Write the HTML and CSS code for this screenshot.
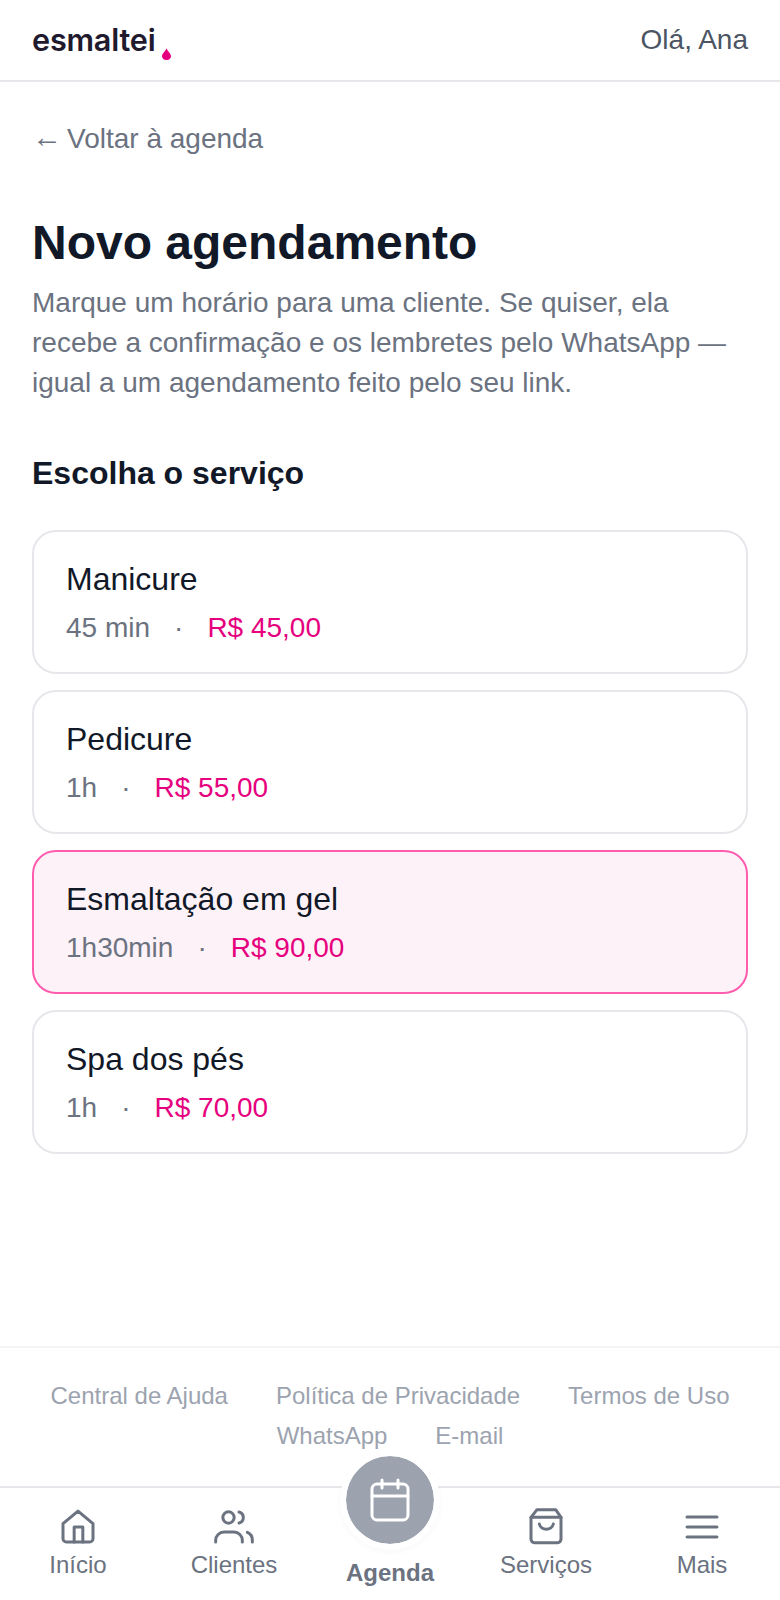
FILE: index.html
```html
<!DOCTYPE html>
<html lang="pt-BR">
<head>
    <meta charset="UTF-8">
    <meta name="viewport" content="width=device-width, initial-scale=1.0">
    <title>Novo agendamento | esmaltei</title>
    <link rel="stylesheet" href="styles.css">
</head>
<body>
<div class="page">

    <header class="topbar">
        <div class="logo">
            <span class="logo-text">esmaltei</span>
            <svg class="logo-drop" viewBox="0 0 10 13"><path d="M5 0C6 3 10 6 10 9a5 4.2 0 0 1-10 0C0 6 4 3 5 0z"/></svg>
        </div>
        <span class="greeting">Olá, Ana</span>
    </header>

    <main class="content">
        <a class="back-link"><span class="arrow">←</span>Voltar à agenda</a>
        <h1>Novo agendamento</h1>
        <p class="intro">Marque um horário para uma cliente. Se quiser, ela recebe a confirmação e os lembretes pelo WhatsApp — igual a um agendamento feito pelo seu link.</p>
        <h2>Escolha o serviço</h2>

        <div class="service-list">
            <div class="service">
                <div class="service-name">Manicure</div>
                <div class="service-meta"><span>45 min</span><span class="dot">·</span><span class="price">R$ 45,00</span></div>
            </div>
            <div class="service">
                <div class="service-name">Pedicure</div>
                <div class="service-meta"><span>1h</span><span class="dot">·</span><span class="price">R$ 55,00</span></div>
            </div>
            <div class="service selected">
                <div class="service-name">Esmaltação em gel</div>
                <div class="service-meta"><span>1h30min</span><span class="dot">·</span><span class="price">R$ 90,00</span></div>
            </div>
            <div class="service">
                <div class="service-name">Spa dos pés</div>
                <div class="service-meta"><span>1h</span><span class="dot">·</span><span class="price">R$ 70,00</span></div>
            </div>
        </div>
    </main>

    <footer class="site-footer">
        <a>Central de Ajuda</a>
        <a>Política de Privacidade</a>
        <a>Termos de Uso</a>
        <a>WhatsApp</a>
        <a>E-mail</a>
    </footer>

    <nav class="bottom-nav">
        <a class="nav-item">
            <svg class="nav-icon" viewBox="0 0 24 24"><path d="M9.7 21v-9h5.2v9"/><path d="M12 2.5 21 10V19a2 2 0 0 1-2 2H5a2 2 0 0 1-2-2V10z"/></svg>
            Início
        </a>
        <a class="nav-item">
            <svg class="nav-icon" viewBox="0 0 24 24"><path d="M1 21v-1a5 5 0 0 1 5-5h6a5 5 0 0 1 5 5v1"/><circle cx="8.7" cy="6.3" r="3.4"/><path d="M23 21v-1.2a5 5 0 0 0-3-4.6"/><path d="M15 3a3.4 3.4 0 0 1 0 6.6"/></svg>
            Clientes
        </a>
        <a class="nav-item nav-center">
            <span class="nav-fab">
                <svg class="fab-icon" viewBox="0 0 24 24"><path d="M8 2v4"/><path d="M16 2v4"/><rect x="3" y="4" width="18" height="18" rx="2.5"/><path d="M3 10h18"/></svg>
            </span>
            Agenda
        </a>
        <a class="nav-item">
            <svg class="nav-icon" viewBox="0 0 24 24"><path d="M6.6 1.6h11.2L21 6.2V19.4a2 2 0 0 1-2 2H5a2 2 0 0 1-2-2V6.2z"/><path d="M3 6.2h18"/><path d="M16.4 10.2a4.3 4 0 0 1-8.4 0"/></svg>
            Serviços
        </a>
        <a class="nav-item">
            <svg class="nav-icon" viewBox="0 0 24 24"><path d="M3 6h18"/><path d="M3 12h18"/><path d="M3 18h18"/></svg>
            Mais
        </a>
    </nav>

</div>
</body>
</html>
```

FILE: styles.css
```css
* {
    box-sizing: border-box;
}
body {
    margin: 0;
    font-family: "Liberation Sans", Arial, sans-serif;
    background-color: #fff;
    color: #111827;
}
.page {
    height: 1600px;
    display: flex;
    flex-direction: column;
    overflow: hidden;
}

/* topo */
.topbar {
    height: 82px;
    flex: none;
    padding: 0 32px;
    display: flex;
    align-items: center;
    justify-content: space-between;
    border-bottom: 2px solid #e5e7eb;
}
.logo {
    display: flex;
    align-items: flex-end;
}
.logo-text {
    font-family: Inter, sans-serif;
    font-weight: 600;
    font-size: 30.6px;
    line-height: 34px;
    letter-spacing: -0.2px;
    color: #1f1a2e;
}
.logo-drop {
    width: 9px;
    height: 12px;
    margin: 0 0 -3px 7px;
    fill: #e6007e;
}
.greeting {
    font-size: 28px;
    color: #4b5563;
}

/* conteudo */
.content {
    flex: 1;
    padding: 0 32px;
}
.back-link {
    display: block;
    margin-top: 41px;
    font-size: 28px;
    line-height: 32px;
    color: #6b7280;
}
.arrow {
    font-family: "Liberation Serif", serif;
    font-size: 30px;
    line-height: 0;
    vertical-align: 1px;
    margin-right: 5px;
}
h1 {
    margin: 54px 0 0;
    font-size: 48px;
    line-height: 68px;
    font-weight: 700;
    color: #111827;
}
.intro {
    margin: 6px 0 0;
    font-size: 28px;
    line-height: 40px;
    color: #6b7280;
}
h2 {
    margin: 48px 0 0;
    font-size: 32px;
    line-height: 44px;
    font-weight: 700;
    color: #111827;
}
.service-list {
    margin-top: 35px;
    display: flex;
    flex-direction: column;
    gap: 16px;
}
.service {
    height: 144px;
    padding: 25px 32px;
    border: 2px solid #e5e7eb;
    border-radius: 24px;
    background-color: #fff;
}
.service.selected {
    border-color: #ff5cb0;
    background-color: #fdf2f8;
}
.service-name {
    font-size: 32px;
    line-height: 44px;
    color: #111827;
}
.service-meta {
    display: flex;
    gap: 24px;
    margin-top: 7px;
    font-size: 28px;
    line-height: 40px;
    color: #6b7280;
}
.price {
    color: #e6007e;
}

/* rodape */
.site-footer {
    flex: none;
    height: 140px;
    padding: 28px 32px 0;
    display: flex;
    flex-wrap: wrap;
    justify-content: center;
    column-gap: 48px;
    align-content: flex-start;
    border-top: 2px solid #f3f4f6;
    font-size: 24px;
    line-height: 40px;
    color: #9ca3af;
}

/* navegacao */
.bottom-nav {
    flex: none;
    height: 114px;
    position: relative;
    display: grid;
    grid-template-columns: repeat(5, 1fr);
    border-top: 2px solid #e5e7eb;
    background-color: #fff;
}
.nav-item {
    display: flex;
    flex-direction: column;
    align-items: center;
    padding-top: 19px;
    font-size: 24px;
    line-height: 36px;
    color: #6b7280;
}
.nav-icon {
    width: 40px;
    height: 40px;
    fill: none;
    stroke: #6b7280;
    stroke-width: 1.8;
    stroke-linecap: round;
    stroke-linejoin: round;
}
.nav-center {
    justify-content: flex-end;
    padding: 0 0 9px;
    font-weight: 700;
}
.nav-fab {
    position: absolute;
    top: -38px;
    left: 50%;
    margin-left: -50px;
    width: 100px;
    height: 100px;
    display: flex;
    align-items: center;
    justify-content: center;
    border-radius: 50%;
    background-color: #9ca3af;
    background-clip: padding-box;
    border: 6px solid #fff;
    box-shadow: 0 2px 6px rgba(0, 0, 0, 0.03);
}
.fab-icon {
    width: 48px;
    height: 48px;
    fill: none;
    stroke: #fff;
    stroke-width: 1.5;
    stroke-linecap: round;
    stroke-linejoin: round;
}
```
